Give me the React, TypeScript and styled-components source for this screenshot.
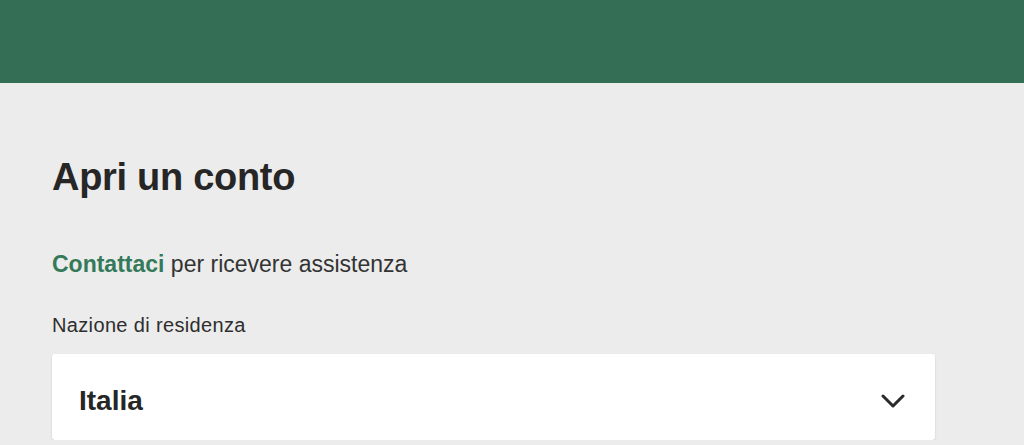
import React from 'react';
import styled, { createGlobalStyle } from 'styled-components';

const GlobalStyle = createGlobalStyle`
  html, body {
    margin: 0;
    padding: 0;
    background: #ebeceb;
    font-family: "Liberation Sans", Arial, sans-serif;
    color: #2a2a2a;
  }
`;

const Header = styled.header`
  height: 83px;
  background: #336e55;
`;

const Main = styled.main`
  padding: 72px 0 0 52px;
  width: 883px;
`;

const Title = styled.h1`
  margin: 0;
  font-size: 38px;
  font-weight: 700;
  line-height: 44px;
  letter-spacing: -0.3px;
  color: #262626;
`;

const Help = styled.p`
  margin: 52px 0 0;
  font-size: 23px;
  line-height: 26px;
  color: #333;
`;

const Link = styled.a`
  color: #347a5a;
  font-weight: 700;
  text-decoration: none;
`;

const Label = styled.label`
  display: block;
  margin-top: 36px;
  font-size: 20px;
  line-height: 24px;
  letter-spacing: 0.35px;
  color: #2e2e2e;
`;

const Select = styled.div`
  margin-top: 17px;
  height: 86px;
  background: #fff;
  border-radius: 3px;
  box-shadow: 0 1px 2px rgba(0, 0, 0, 0.15);
  display: flex;
  align-items: center;
  justify-content: space-between;
  padding: 8px 30px 0 27px;
  box-sizing: border-box;
`;

const Value = styled.span`
  font-size: 28px;
  font-weight: 700;
  color: #262626;
`;

const Chevron = () => (
  <svg width="24" height="15" viewBox="0 0 24 15" fill="none">
    <path d="M2 2l10 10L22 2" stroke="#2a2a2a" strokeWidth="3" strokeLinecap="round" strokeLinejoin="round" />
  </svg>
);

export default function App() {
  return (
    <>
      <GlobalStyle />
      <Header />
      <Main>
        <Title>Apri un conto</Title>
        <Help>
          <Link href="#">Contattaci</Link> per ricevere assistenza
        </Help>
        <Label>Nazione di residenza</Label>
        <Select>
          <Value>Italia</Value>
          <Chevron />
        </Select>
      </Main>
    </>
  );
}
